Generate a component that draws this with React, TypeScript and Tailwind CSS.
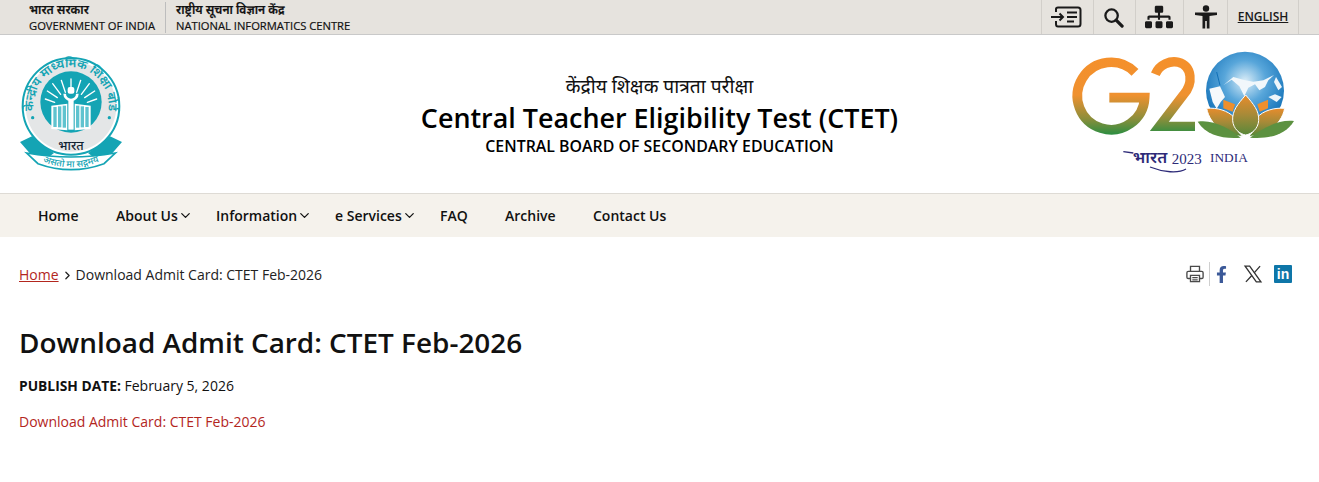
import { ChevronDown, ChevronRight } from 'lucide-react';
import { FaFacebookF, FaSitemap } from 'react-icons/fa';

const navItems = [
  { label: 'Home', width: 'w-[78px]' },
  { label: 'About Us', width: 'w-[100px]', menu: true },
  { label: 'Information', width: 'w-[119px]', menu: true },
  { label: 'e Services', width: 'w-[105px]', menu: true },
  { label: 'FAQ', width: 'w-[65px]' },
  { label: 'Archive', width: 'w-[88px]' },
  { label: 'Contact Us', width: 'w-[100px]' },
];

const deva = "'Noto Sans Devanagari','Noto Sans',sans-serif";

function CbseLogo() {
  return (
    <svg viewBox="0 0 375 405" className="w-[125px] h-[135px]">
      <defs>
        <path id="topArc" d="M 74 210 A 113 118 0 1 1 292 210" />
        <path id="ribbonArc" d="M 85 338 Q 183 384 281 338" />
      </defs>
      <circle cx="183" cy="178" r="145" fill="#fff" stroke="#14a4b4" strokeWidth="6" />
      <circle cx="183" cy="178" r="136" fill="#e4e6e7" />
      <circle cx="183" cy="165" r="92" fill="#14a4b4" />
      {/* ribbon */}
      <path d="M 30 285 L 66 268 Q 100 300 132 318 L 88 352 Z" fill="#14a4b4" />
      <path d="M 336 285 L 300 268 Q 266 300 234 318 L 278 352 Z" fill="#14a4b4" />
      <path d="M 50 318 Q 183 342 316 318 L 282 350 Q 183 386 84 350 Z" fill="#fff" stroke="#14a4b4" strokeWidth="5" />
      <text fontSize="37" fill="#14a4b4" fontWeight="600" fontFamily={deva}>
        <textPath href="#topArc" startOffset="50%" textAnchor="middle">केन्द्रीय माध्यमिक शिक्षा बोर्ड</textPath>
      </text>
      <circle cx="68" cy="212" r="5" fill="#14a4b4" />
      <circle cx="298" cy="212" r="5" fill="#14a4b4" />
      <text x="183" y="308" fontSize="38" textAnchor="middle" fill="#123" fontWeight="500" fontFamily={deva}>भारत</text>
      <text fontSize="28" fill="#14a4b4" fontWeight="500" fontFamily={deva}>
        <textPath href="#ribbonArc" startOffset="50%" textAnchor="middle">असतो मा सद्गमय</textPath>
      </text>
      {/* sun rays */}
      <g stroke="#fff" strokeWidth="4" strokeLinecap="round">
        <path d="M183 132 L183 96 M166 136 L154 100 M200 136 L212 100 M152 142 L128 110 M214 142 L238 110 M142 152 L112 132 M224 152 L254 132 M134 166 L106 156 M232 166 L260 156" />
      </g>
      <path d="M 160 140 A 23 23 0 0 0 206 140 L 198 140 A 15 15 0 0 1 168 140 Z" fill="#fff" />
      <rect x="173" y="120" width="20" height="20" rx="6" fill="#fff" />
      <rect x="175" y="160" width="16" height="88" fill="#fff" />
      {/* open book */}
      <path d="M 124 176 L 172 170 L 172 250 L 124 246 Z M 194 170 L 242 176 L 242 246 L 194 250 Z" fill="#fff" />
      <g fill="#5fc3cf">
        <rect x="130" y="180" width="10" height="60" />
        <rect x="144" y="178" width="10" height="63" />
        <rect x="158" y="176" width="10" height="66" />
        <rect x="198" y="176" width="10" height="66" />
        <rect x="212" y="178" width="10" height="63" />
        <rect x="226" y="180" width="10" height="60" />
      </g>
    </svg>
  );
}

function G20Logo() {
  return (
    <svg viewBox="0 0 807 450" className="w-[269px] h-[150px]">
      <defs>
        <linearGradient id="gTxt" gradientUnits="userSpaceOnUse" x1="0" y1="52" x2="0" y2="285">
          <stop offset="0" stopColor="#f5902b" />
          <stop offset="0.5" stopColor="#ef9130" />
          <stop offset="0.8" stopColor="#8d8e3b" />
          <stop offset="1" stopColor="#2f8e41" />
        </linearGradient>
        <radialGradient id="globe" cx="0.5" cy="0.38" r="0.6">
          <stop offset="0" stopColor="#dceef8" />
          <stop offset="0.45" stopColor="#58a6da" />
          <stop offset="1" stopColor="#1170b7" />
        </radialGradient>
        <linearGradient id="petal" x1="0" y1="0" x2="0" y2="1">
          <stop offset="0" stopColor="#e88c2c" />
          <stop offset="0.5" stopColor="#a68a38" />
          <stop offset="1" stopColor="#58883a" />
        </linearGradient>
      </defs>
      <path d="M 255 100 A 101 101 0 1 0 284 176 H 178" fill="none" stroke="url(#gTxt)" strokeWidth="29" />
      <path d="M 316 106 C 328 76 362 64 385 70 C 428 82 430 134 400 168 L 328 262 H 435" fill="none" stroke="url(#gTxt)" strokeWidth="28" />
      <circle cx="585" cy="155" r="117" fill="url(#globe)" />
      {/* land masses */}
      <g transform="translate(450 24)">
        <path d="M 70 115 L 95 98 L 118 118 L 133 148 L 145 122 L 165 112 L 178 130 L 195 120 L 205 100 L 222 84 L 190 100 L 160 104 L 135 100 L 100 90 Z" fill="#f1f7fb" />
        <path d="M 28 125 L 60 118 L 75 150 L 62 165 L 50 185 L 38 165 Z" fill="#f6f9fb" />
        <path d="M 228 90 L 246 120 L 235 130 L 222 105 Z" fill="#eef5fa" />
        <path d="M 205 150 L 225 142 L 245 150 L 230 165 Z" fill="#eef5fa" />
        <path d="M 50 75 L 60 115" stroke="#1170b7" strokeWidth="3" />
      </g>
      {/* lotus */}
      <path d="M 520 182 L 555 196 L 548 218 L 520 208 Z M 654 182 L 622 196 L 629 218 L 654 208 Z" fill="#ee8f2d" />
      <path d="M 470 208 C 500 205 535 215 552 235 C 550 260 565 280 578 292 C 530 292 480 260 470 208 Z" fill="url(#petal)" stroke="#fff" strokeWidth="3" />
      <path d="M 704 208 C 674 205 639 215 622 235 C 624 260 609 280 596 292 C 644 292 694 260 704 208 Z" fill="url(#petal)" stroke="#fff" strokeWidth="3" />
      <path d="M 587 168 C 610 195 628 215 626 245 C 624 270 605 285 587 288 C 569 285 550 270 548 245 C 546 215 564 195 587 168 Z" fill="url(#petal)" stroke="#fff" strokeWidth="3" />
      <path d="M 443 248 C 490 240 540 270 572 296 C 520 300 470 290 443 248 Z" fill="#5c9140" />
      <path d="M 732 246 C 685 240 635 270 600 296 C 655 300 705 290 732 246 Z" fill="#5c9140" />
      <path d="M 220 338 L 250 342" stroke="#2d2a78" strokeWidth="4" />
      <text x="300" y="372" fontSize="50" textAnchor="middle" fill="#2d2a78" fontWeight="600" fontFamily={deva}>भारत</text>
      <path d="M 300 384 C 340 400 385 404 408 390" fill="none" stroke="#2d2a78" strokeWidth="4" />
      <text x="365" y="374" fontSize="45" fill="#2d2a78" fontFamily="'Liberation Serif',serif">2023</text>
      <text x="480" y="368" fontSize="40" fill="#2d2a78" fontFamily="'Liberation Serif',serif">INDIA</text>
    </svg>
  );
}

function SkipIcon() {
  return (
    <svg viewBox="0 0 32 22" className="w-8 h-[22px] -ml-[3px]" fill="none" stroke="#1a1a1a" strokeWidth="2">
      <path d="M6 6 V3 Q6 1.5 8 1.5 H28 Q30.5 1.5 30.5 4 V18 Q30.5 20.5 28 20.5 H8 Q6 20.5 6 18 V15" />
      <path d="M1 11 H13 M9.5 7.5 L13 11 L9.5 14.5" />
      <path d="M17 6.5 H27 M17 11 H27 M17 15.5 H24" />
    </svg>
  );
}

function SearchIcon() {
  return (
    <svg viewBox="0 0 22 22" className="w-[21px] h-[21px] -ml-[2px]" fill="none" stroke="#1a1a1a">
      <circle cx="9" cy="9" r="6.5" strokeWidth="2.4" />
      <path d="M13.8 13.8 L20 20" strokeWidth="3.4" strokeLinecap="round" />
    </svg>
  );
}

function PersonIcon() {
  return (
    <svg viewBox="0 0 24 24" className="w-[26px] h-[24px]" fill="#1a1a1a">
      <circle cx="12" cy="3.5" r="3.2" />
      <path d="M1 7.5 H23 V10 L15.5 11 V23.5 H12.8 V16 H11.2 V23.5 H8.5 V11 L1 10 Z" />
    </svg>
  );
}

function PrintIcon() {
  return (
    <svg viewBox="0 0 20 20" className="w-[18px] h-[20px]" fill="none" stroke="#4a4a4a" strokeWidth="1.5">
      <path d="M5 7 V1.5 H15 V7" />
      <path d="M5 15 H2.5 Q1 15 1 13.5 V8.5 Q1 7 2.5 7 H17.5 Q19 7 19 8.5 V13.5 Q19 15 17.5 15 H15" />
      <path d="M5 11.5 H15 V18.5 H5 Z" />
      <path d="M7 14 H13 M7 16.5 H13" strokeWidth="1.2" />
    </svg>
  );
}

function XIcon() {
  return (
    <svg viewBox="0 0 24 24" className="w-[20px] h-[20px] ml-[14px]" fill="none" stroke="#333" strokeWidth="1.6">
      <path d="M2.5 2.5 H8 L21.5 21.5 H16 Z" />
      <path d="M20.5 2.5 L13.4 10.6 M10.6 13.8 L3.5 21.5" />
    </svg>
  );
}

function LinkedinIcon() {
  return (
    <svg viewBox="0 0 18 18" className="w-[18px] h-[18px] ml-[11px]">
      <rect width="18" height="18" rx="1" fill="#0e76a8" />
      <text x="9" y="14" textAnchor="middle" fontSize="14" fontWeight="700" fill="#fff" fontFamily="'Liberation Sans',sans-serif">in</text>
    </svg>
  );
}

export default function App() {
  return (
    <div className="min-h-[482px] bg-white text-[#111] font-['Open_Sans','Noto_Sans_Devanagari',sans-serif]">
      {/* TOP STRIP */}
      <div className="h-[35px] bg-[#e6e3de] border-b border-[#c9c9c9] flex justify-between">
        <div className="flex pl-[29px] pt-[2px] text-[11.2px] leading-[16px] text-[#111] [-webkit-text-stroke:0.2px]">
          <div className="pr-[10px] border-r border-[#bdbdbd] h-[31px]">
            <p className="font-semibold text-[12px]">भारत सरकार</p>
            <p>GOVERNMENT OF INDIA</p>
          </div>
          <div className="pl-[10px]">
            <p className="font-semibold text-[12px]">राष्ट्रीय सूचना विज्ञान केंद्र</p>
            <p>NATIONAL INFORMATICS CENTRE</p>
          </div>
        </div>
        <div className="flex mr-[20px] border-l border-[#d2cfca]">
          <div className="w-[52px] flex items-center justify-center border-r border-[#d2cfca]"><SkipIcon /></div>
          <div className="w-[42px] flex items-center justify-center border-r border-[#d2cfca]"><SearchIcon /></div>
          <div className="w-[48px] flex items-center justify-center border-r border-[#d2cfca]"><FaSitemap className="w-[28px] h-[24px] -ml-[1px] text-[#1a1a1a]" /></div>
          <div className="w-[44px] flex items-center justify-center border-r border-[#d2cfca]"><PersonIcon /></div>
          <div className="w-[71px] flex items-center justify-center border-r border-[#d2cfca]">
            <a className="text-[12px] font-semibold underline text-[#1a1a1a]">ENGLISH</a>
          </div>
        </div>
      </div>

      {/* HEADER */}
      <header className="h-[158px] flex items-center justify-between">
        <div className="pl-[10px] w-[269px]"><CbseLogo /></div>
        <div className="flex-1 text-center">
          <p className="text-[19.2px] leading-[26px]">केंद्रीय शिक्षक पात्रता परीक्षा</p>
          <h1 className="text-[26.9px] leading-[38px] font-semibold text-black">Central Teacher Eligibility Test (CTET)</h1>
          <p className="text-[15.9px] leading-[18px] font-semibold text-black">CENTRAL BOARD OF SECONDARY EDUCATION</p>
        </div>
        <div className="w-[269px]"><G20Logo /></div>
      </header>

      {/* NAV */}
      <nav className="h-[44px] bg-[#f5f2ec] border-t border-[#dedbd5] flex items-center pl-[38px] text-[14px] font-semibold text-[#111]">
        {navItems.map((item) => (
          <a key={item.label} className={`${item.width} flex items-center`}>
            {item.label}
            {item.menu && <ChevronDown className="w-[15px] h-[15px] -mr-[1px]" strokeWidth={2} />}
          </a>
        ))}
      </nav>

      {/* CONTENT */}
      <main className="px-[19px]">
        <div className="flex justify-between items-center pt-[26px] pr-[8px]">
          <div className="flex items-center text-[14px] leading-[24px] text-[#222]">
            <a className="text-[#b3261e] underline">Home</a>
            <ChevronRight className="w-[13px] h-[13px] mx-[2px]" strokeWidth={2.4} />
            <span>Download Admit Card: CTET Feb-2026</span>
          </div>
          <div className="flex items-center -mt-[2px]">
            <div className="pr-[5px] h-[24px] border-r border-[#cfcfcf] flex items-center">
              <PrintIcon />
            </div>
            <FaFacebookF className="w-[15px] h-[17px] ml-[4px] text-[#3b5998]" />
            <XIcon />
            <LinkedinIcon />
          </div>
        </div>
        <h2 className="mt-[36px] text-[27.9px] leading-[38px] font-semibold text-[#111]">Download Admit Card: CTET Feb-2026</h2>
        <p className="mt-[13px] text-[14px] leading-[24px]"><strong className="font-bold text-[13.8px]">PUBLISH DATE:</strong> February 5, 2026</p>
        <p className="mt-[12px] text-[14px] leading-[24px] text-[#b3261e]">Download Admit Card: CTET Feb-2026</p>
      </main>
    </div>
  );
}
